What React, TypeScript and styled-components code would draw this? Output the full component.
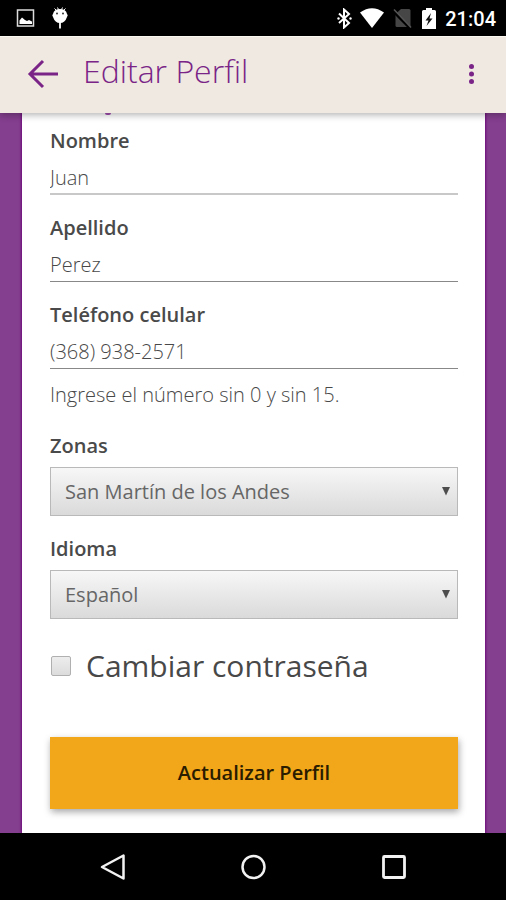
import React from "react";
import styled, { createGlobalStyle, css } from "styled-components";

const GlobalStyle = createGlobalStyle`
  *, *::before, *::after { box-sizing: border-box; }
  body { margin: 0; background: #000; }
  button, input, select { font: inherit; margin: 0; }
`;

const purple = "#7a2487";

const Screen = styled.div`
  min-height: 100vh;
  display: flex;
  flex-direction: column;
  font-family: "Open Sans", "Noto Sans", sans-serif;
  font-size: 20px;
  color: #4a4a4a;
`;

const StatusBar = styled.div`
  height: 36px;
  flex: none;
  display: flex;
  align-items: center;
  justify-content: space-between;
  padding: 0 10px 0 16px;
  background: #000;
  color: #fff;
`;

const StatusGroup = styled.div<{ $gap: number }>`
  display: flex;
  align-items: center;
  gap: ${(p) => p.$gap}px;
`;

const Clock = styled.time`
  font-family: Roboto, sans-serif;
  font-weight: 500;
  font-size: 20px;
  line-height: 24px;
  padding-top: 2px;
`;

const AppBar = styled.header`
  height: 77px;
  flex: none;
  display: flex;
  align-items: center;
  padding: 0 14px 2px 21px;
  background: #efe9e1;
  border-top: 1px solid #fbf8f2;
  box-shadow: 0 2px 7px rgba(0, 0, 0, 0.3);
  position: relative;
  z-index: 1;
`;

const IconButton = styled.button`
  display: flex;
  padding: 4px;
  border: 0;
  background: none;
  color: ${purple};
  cursor: pointer;
`;

const Title = styled.h1`
  flex: 1;
  margin: 0 0 6px;
  padding-left: 20px;
  font-size: 32px;
  line-height: 44px;
  font-weight: 300;
  color: ${purple};
`;

const Main = styled.main`
  flex: 1;
  display: flex;
  padding: 0 21px 0 22px;
  background: #843f8e;
`;

const Card = styled.form`
  flex: 1;
  min-width: 0;
  padding: 0 27px 24px 28px;
  background: #fff;
  box-shadow: 0 0 2px 1px #6d0a7c;
`;

const ScrolledHeading = styled.div`
  height: 14px;
  padding-left: 55px;

  &::before {
    content: "";
    display: block;
    width: 6px;
    height: 2px;
    border-radius: 0 0 3px 3px;
    background: #843f8e;
    position: relative;
    z-index: 2;
  }
`;

const Field = styled.div<{ $last?: boolean }>`
  display: flex;
  flex-direction: column;
  margin-bottom: ${(p) => (p.$last ? 0 : 19)}px;
`;

const Label = styled.label`
  line-height: 28px;
  font-weight: 600;
  color: #4a4a4a;
`;

const lightText = css`
  font-weight: 300;
  color: #484848;
`;

const TextInput = styled.input<{ $focused?: boolean }>`
  ${lightText}
  width: 100%;
  height: 40px;
  padding: 6px 0 0;
  border: 0;
  border-bottom: ${(p) => (p.$focused ? "2px solid #c8c8c8" : "1px solid #888")};
  border-radius: 0;
  background: none;
  outline: none;
`;

const Hint = styled.p`
  ${lightText}
  margin: 12px 0 23px;
  line-height: 28px;
`;

const SelectBox = styled.div`
  display: grid;
  align-items: center;
  margin-top: 7px;

  > * { grid-area: 1 / 1; }

  > svg {
    justify-self: end;
    margin-right: 8px;
    pointer-events: none;
  }
`;

const Select = styled.select`
  appearance: none;
  width: 100%;
  height: 49px;
  padding: 0 32px 0 14px;
  border: 1px solid #b9b9b9;
  border-radius: 0;
  background: linear-gradient(#f7f7f7, #dadada);
  font-weight: 400;
  color: #666;
`;

const CheckRow = styled.label`
  display: flex;
  align-items: center;
  gap: 15px;
  margin: 27px 0 51px;
  padding-left: 1px;
  font-size: 30px;
  line-height: 40px;
  font-weight: 500;
  color: #484848;
`;

const Checkbox = styled.input`
  appearance: none;
  flex: none;
  width: 20px;
  height: 20px;
  border: 1px solid #b0b0b0;
  border-radius: 2px;
  background: linear-gradient(#ededed, #dcdcdc);

  &:checked { background: ${purple}; }
`;

const SubmitButton = styled.button`
  width: 100%;
  height: 72px;
  padding: 0 0 2px;
  border: 0;
  background: #f2a61a;
  box-shadow: 1px 3px 7px rgba(0, 0, 0, 0.35);
  font-weight: 600;
  color: #2a1c00;
  cursor: pointer;
`;

const NavBar = styled.nav`
  height: 67px;
  flex: none;
  display: flex;
  align-items: center;
  justify-content: center;
  gap: 104px;
  background: #000;
`;

const NavButton = styled(IconButton)`
  color: #f2f2f2;
`;

const Caret = () => (
  <svg width="8" height="9" viewBox="0 0 8 9" aria-hidden="true">
    <path d="M0 0h8L4 8.500z" fill="#4d4d4d" />
  </svg>
);

const zones = ["San Martín de los Andes"];
const languages = ["Español"];

const fields = [
  { id: "nombre", label: "Nombre", value: "Juan", type: "text", focused: true },
  { id: "apellido", label: "Apellido", value: "Perez", type: "text" },
  { id: "telefono", label: "Teléfono celular", value: "(368) 938-2571", type: "tel" },
];

const selects = [
  { id: "zonas", label: "Zonas", options: zones },
  { id: "idioma", label: "Idioma", options: languages },
];

export default function App() {
  return (
    <Screen>
      <GlobalStyle />
      <StatusBar>
        <StatusGroup $gap={16}>
          <svg width="19" height="18" viewBox="0 0 19 18" aria-hidden="true">
            <rect x="1.500" y="1" width="16" height="16" fill="none" stroke="#ddd" strokeWidth="1.500" />
            <path d="M3.500 15v-3.500l2.500-3 3 2.500 2 1 2-1 3 1.500V15z" fill="#fff" />
          </svg>
          <svg width="18" height="24" viewBox="0 0 18 24" aria-hidden="true">
            <path d="M3.500 2.500l2 2M14.500 2.500l-2 2M6.500 1.500l1 2M11.500 1.500l-1 2" stroke="#fff" strokeWidth="1" />
            <path d="M2 8Q3 3 9 3T16 8Q17.500 9 16 11Q14 17 9 17T2 11Q.5 9 2 8z" fill="#fff" />
            <path d="M9 16v6.500" stroke="#fff" strokeWidth="1.800" />
            <circle cx="6" cy="7.500" r="1" fill="#333" />
            <circle cx="12" cy="7.500" r="1" fill="#333" />
          </svg>
        </StatusGroup>
        <StatusGroup $gap={8}>
          <svg width="15" height="21" viewBox="0 0 15 21" aria-hidden="true">
            <path d="M2 5.500l10 9.500-5 4.500V1.500L12 6 2 15" fill="none" stroke="#fff" strokeWidth="2" />
            <circle cx="1.500" cy="10.500" r="1.200" fill="#fff" />
            <circle cx="13.500" cy="10.500" r="1.200" fill="#fff" />
          </svg>
          <svg width="25" height="20" viewBox="0 0 25 20" aria-hidden="true">
            <path d="M0 4.500Q12-4 24 4.500L12 20z" fill="#fff" />
          </svg>
          <svg width="20" height="21" viewBox="0 0 20 21" aria-hidden="true">
            <path d="M8 1h8q1.500 0 1.500 1.500V19H4q-1.500 0-1.500-1.500V6z" fill="#464646" />
            <path d="M0 3l17 17" stroke="#000" strokeWidth="3" />
            <path d="M1 1.500L18 19.500" stroke="#555" strokeWidth="1.500" />
          </svg>
          <StatusGroup $gap={8}>
            <svg width="16" height="21" viewBox="0 0 16 21" aria-hidden="true">
              <path d="M5 0h6v2h2.500Q15 2 15 3.500V21H1V3.500Q1 2 2.500 2H5z" fill="#fff" />
              <path d="M10 5L4.500 12.500H7.500L5.500 18l6-7.500H8.500z" fill="#111" />
            </svg>
            <Clock>21:04</Clock>
          </StatusGroup>
        </StatusGroup>
      </StatusBar>

      <AppBar>
        <IconButton type="button" aria-label="Volver">
          <svg width="34" height="32" viewBox="0 0 34 32" aria-hidden="true">
            <path d="M18 3L5 16l13 13M5 16h28" fill="none" stroke="currentColor" strokeWidth="3" />
          </svg>
        </IconButton>
        <Title>Editar Perfil</Title>
        <IconButton type="button" aria-label="Más opciones">
          <svg width="32" height="24" viewBox="0 0 32 24" aria-hidden="true">
            <circle cx="15.500" cy="4.500" r="2.500" fill="currentColor" />
            <circle cx="15.500" cy="12" r="2.500" fill="currentColor" />
            <circle cx="15.500" cy="19.500" r="2.500" fill="currentColor" />
          </svg>
        </IconButton>
      </AppBar>

      <Main>
        <Card onSubmit={(e) => e.preventDefault()}>
          <ScrolledHeading />
          {fields.map((f) => (
            <Field key={f.id} $last={f.id === "telefono"}>
              <Label htmlFor={f.id}>{f.label}</Label>
              <TextInput id={f.id} type={f.type} defaultValue={f.value} $focused={f.focused} />
            </Field>
          ))}
          <Hint>Ingrese el número sin 0 y sin 15.</Hint>
          {selects.map((s) => (
            <Field key={s.id} $last={s.id === "idioma"}>
              <Label htmlFor={s.id}>{s.label}</Label>
              <SelectBox>
                <Select id={s.id}>
                  {s.options.map((o) => (
                    <option key={o}>{o}</option>
                  ))}
                </Select>
                <Caret />
              </SelectBox>
            </Field>
          ))}
          <CheckRow>
            <Checkbox type="checkbox" />
            Cambiar contraseña
          </CheckRow>
          <SubmitButton type="submit">Actualizar Perfil</SubmitButton>
        </Card>
      </Main>

      <NavBar aria-label="Sistema">
        <NavButton type="button" aria-label="Atrás">
          <svg width="28" height="28" viewBox="0 0 28 28" aria-hidden="true">
            <path d="M24.500 2.500v23L3 14z" fill="none" stroke="currentColor" strokeWidth="2.500" strokeLinejoin="round" />
          </svg>
        </NavButton>
        <NavButton type="button" aria-label="Inicio">
          <svg width="28" height="28" viewBox="0 0 28 28" aria-hidden="true">
            <circle cx="14.500" cy="14" r="11" fill="none" stroke="currentColor" strokeWidth="2.500" />
          </svg>
        </NavButton>
        <NavButton type="button" aria-label="Recientes">
          <svg width="28" height="28" viewBox="0 0 28 28" aria-hidden="true">
            <rect x="4.500" y="3.500" width="21" height="21" rx="1" fill="none" stroke="currentColor" strokeWidth="2.800" />
          </svg>
        </NavButton>
      </NavBar>
    </Screen>
  );
}
